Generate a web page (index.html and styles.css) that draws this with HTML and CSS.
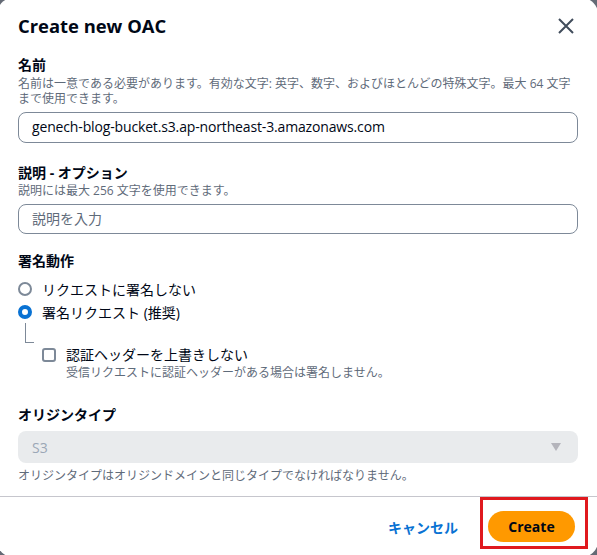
FILE: index.html
```html
<!DOCTYPE html>
<html lang="ja">
<head>
<meta charset="utf-8">
<link rel="stylesheet" href="styles.css">
</head>
<body>
<div class="modal">
  <div class="header">
    <h2 class="title">Create new OAC</h2>
    <button class="close" aria-label="close">
      <svg width="16" height="16" viewBox="0 0 16 16"><path d="M1 1L15 15M15 1L1 15" stroke="#414d5c" stroke-width="2" fill="none"/></svg>
    </button>
  </div>
  <div class="content">
    <div class="field f-name">
      <div class="label">名前</div>
      <div class="desc">名前は一意である必要があります。有効な文字: 英字、数字、およびほとんどの特殊文字。最大 64 文字まで使用できます。</div>
      <div class="input">genech-blog-bucket.s3.ap-northeast-3.amazonaws.com</div>
    </div>
    <div class="field f-desc">
      <div class="label">説明 - オプション</div>
      <div class="desc">説明には最大 256 文字を使用できます。</div>
      <div class="input placeholder">説明を入力</div>
    </div>
    <div class="field f-sign">
      <div class="label">署名動作</div>
      <div class="radios">
        <div class="radio-row"><span class="radio"></span><span class="radio-label">リクエストに署名しない</span></div>
        <div class="radio-row"><span class="radio on"></span><span class="radio-label">署名リクエスト (推奨)</span></div>
      </div>
      <div class="sub">
        <span class="tree"></span>
        <div class="check-row">
          <span class="checkbox"></span>
          <div>
            <div class="check-label">認証ヘッダーを上書きしない</div>
            <div class="desc">受信リクエストに認証ヘッダーがある場合は署名しません。</div>
          </div>
        </div>
      </div>
    </div>
    <div class="field f-origin">
      <div class="label">オリジンタイプ</div>
      <div class="select"><span>S3</span><span class="caret"></span></div>
      <div class="desc helper">オリジンタイプはオリジンドメインと同じタイプでなければなりません。</div>
    </div>
  </div>
  <div class="footer">
    <span class="cancel">キャンセル</span>
    <span class="create">Create</span>
    <span class="highlight"></span>
  </div>
</div>
</body>
</html>
```
FILE: styles.css
```css
* { box-sizing: border-box; }
html, body { margin: 0; padding: 0; }
body {
  background: #646a75;
  width: 597px;
  height: 555px;
  overflow: hidden;
  font-family: "Open Sans", "Noto Sans CJK JP", sans-serif;
  color: #000716;
}
.modal {
  position: relative;
  width: 601px;
  height: 559px;
  margin: -2px 0 0 -3px;
  background: #fff;
  border-radius: 16px;
  padding-left: 3px;
  padding-top: 2px;
}
.header {
  display: flex;
  justify-content: space-between;
  align-items: center;
  padding: 14px 24px 0 18px;
}
.title {
  margin: 0;
  font-size: 18.4px;
  line-height: 24px;
  font-weight: 700;
}
.close {
  border: 0;
  background: none;
  padding: 0;
  width: 16px;
  height: 16px;
  display: flex;
}
.content {
  padding: 0 20px 0 18px;
}
.label {
  font-size: 14px;
  line-height: 20px;
  font-weight: 700;
}
.desc {
  font-size: 12px;
  line-height: 15px;
  color: #5f6b7a;
}
.f-name { margin-top: 17px; }
.f-name .desc { margin-top: 1px; }
.input {
  margin-top: 6px;
  height: 31px;
  border: 1.5px solid #7d8998;
  border-radius: 8px;
  padding: 0 13px;
  font-size: 14px;
  line-height: 28px;
  letter-spacing: -0.15px;
  color: #000716;
}
.input.placeholder { color: #5f6b7a; letter-spacing: 0; }
.f-desc { margin-top: 20px; }
.f-desc .input { height: 30px; line-height: 27px; }
.f-sign { margin-top: 17px; }
.radios { margin-top: 6px; }
.radio-row {
  display: flex;
  align-items: center;
  height: 23px;
  font-size: 14px;
}
.radio {
  width: 14px;
  height: 14px;
  border-radius: 50%;
  border: 2px solid #7d8998;
  margin-right: 10px;
  flex: none;
}
.radio.on {
  border: 4px solid #0972d3;
}
.sub {
  position: relative;
  padding-left: 24px;
  padding-top: 22px;
}
.tree {
  position: absolute;
  left: 7px;
  top: 0;
  width: 9px;
  height: 20px;
  border-left: 1px solid #7d8998;
  border-bottom: 1px solid #7d8998;
}
.check-row {
  display: flex;
  align-items: flex-start;
}
.checkbox {
  width: 14px;
  height: 14px;
  border: 2px solid #7d8998;
  border-radius: 3px;
  margin: 3px 10px 0 0;
  flex: none;
}
.check-label {
  font-size: 14px;
  line-height: 20px;
}
.f-origin { margin-top: 25px; }
.select {
  margin-top: 6px;
  height: 32px;
  background: #e9ebed;
  border-radius: 8px;
  display: flex;
  justify-content: space-between;
  align-items: center;
  padding: 0 17px 0 14px;
  font-size: 14px;
  color: #9ba7b6;
}
.caret {
  width: 0;
  height: 0;
  border-left: 5px solid transparent;
  border-right: 5px solid transparent;
  border-top: 8px solid #b4b4bb;
}
.helper { margin-top: 5px; }
.footer {
  position: absolute;
  left: 0;
  right: 0;
  top: 498px;
  border-top: 1px solid #c6c6cd;
  display: flex;
  justify-content: flex-end;
  align-items: center;
  padding: 14px 23px 0 0;
  gap: 30px;
}
.cancel {
  color: #0972d3;
  font-weight: 700;
  font-size: 14px;
}
.create {
  width: 87px;
  height: 31px;
  border-radius: 16px;
  background: #ff9900;
  color: #000716;
  font-weight: 700;
  font-size: 14px;
  display: flex;
  align-items: center;
  justify-content: center;
}
.highlight {
  position: absolute;
  left: 483px;
  top: 0px;
  width: 108px;
  height: 52px;
  border: 3px solid #e0191e;
}
```
